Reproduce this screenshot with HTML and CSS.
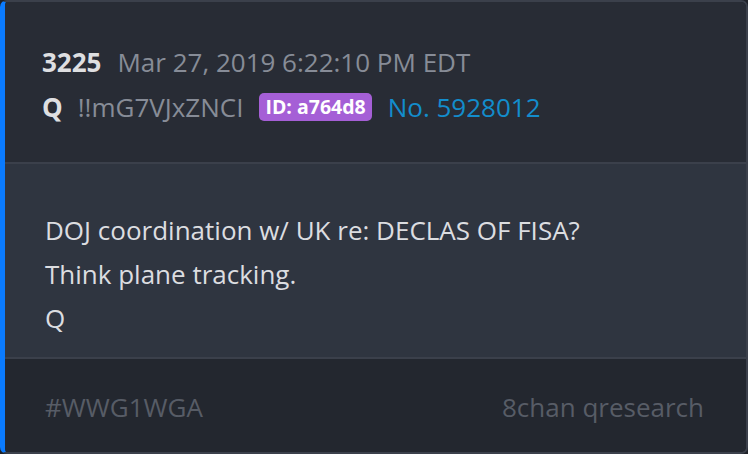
FILE: index.html
```html
<!DOCTYPE html>
<html>
<head>
<meta charset="utf-8">
<link rel="stylesheet" href="styles.css">
</head>
<body>
<div class="card">
  <div class="head">
    <div class="line"><span class="num">3225</span><span class="date">Mar 27, 2019 6:22:10 PM EDT</span></div>
    <div class="line"><span class="name">Q</span><span class="trip">!!mG7VJxZNCI</span><span class="badge">ID: a764d8</span><span class="no">No. 5928012</span></div>
  </div>
  <div class="body">
    <div class="para">DOJ coordination w/ UK re: DECLAS OF FISA?</div>
    <div class="para">Think plane tracking.</div>
    <div class="para">Q</div>
  </div>
  <div class="foot">
    <span class="tag">#WWG1WGA</span>
    <span class="src">8chan qresearch</span>
  </div>
</div>
</body>
</html>
```
FILE: styles.css
```css
* { box-sizing: border-box; }
html, body { margin: 0; padding: 0; background: #1f2229; }
body { font-family: "Open Sans", "Noto Sans", sans-serif; width: 748px; height: 454px; }
.card {
  width: 748px;
  height: 454px;
  border: 2px solid #3b404b;
  border-left: 5px solid #0a7bff;
  border-radius: 7px;
  overflow: hidden;
  display: flex;
  flex-direction: column;
}
.head {
  background: #282c35;
  height: 162px;
  padding: 37px 0 0 37px;
  border-bottom: 2px solid #3b404b;
}
.line { display: flex; align-items: center; height: 45px; font-size: 26px; white-space: nowrap; }
.num { font-weight: 700; color: #dedfe1; margin-right: 16px; }
.date { color: #878c97; }
.name { font-weight: 700; color: #dedfe1; margin-right: 15px; }
.trip { color: #878c97; margin-right: 16px; }
.badge {
  background: #a55fd6;
  color: #fff;
  font-weight: 700;
  font-size: 19.5px;
  border-radius: 5px;
  height: 28px;
  line-height: 28px;
  padding: 0 6px;
  margin-right: 16px;
}
.no { color: #138dcc; }
.body {
  background: #2f3540;
  height: 195px;
  padding: 44px 0 0 40px;
  border-bottom: 2px solid #3b404b;
}
.para { font-size: 26px; line-height: 44px; color: #dcdde0; }
.foot {
  background: #23272f;
  flex: 1;
  display: flex;
  justify-content: space-between;
  align-items: center;
  padding: 2px 42px 0 40px;
  font-size: 26px;
  color: #575c66;
}
```
